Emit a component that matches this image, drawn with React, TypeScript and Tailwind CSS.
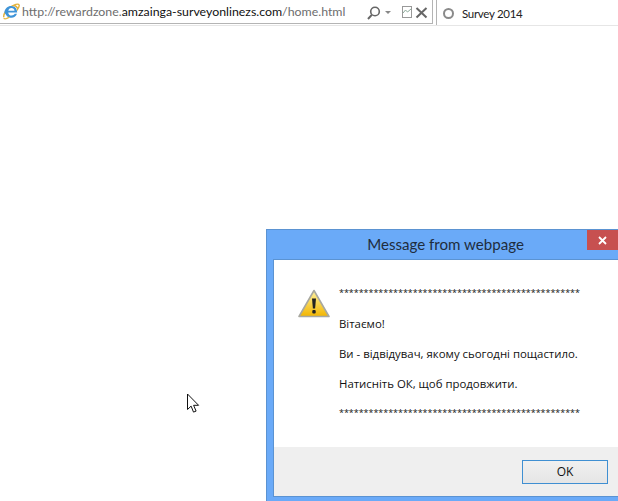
import React from "react";

const IeIcon = () => (
  <svg width="18" height="19" viewBox="0 0 19 19" className="shrink-0">
    <path d="M2 15.500C1 13 5 5.500 12 3c3-1.200 5.500-1.500 6-.5.600 1-.500 3-1.500 4.500C16.500 5 14.500 3 12 3.500" fill="none" stroke="#e3b23c" strokeWidth="1.500" />
    <path d="M2.500 10.500C3 6.500 6 3.800 9.700 3.800c3.900 0 6.300 3 6.300 6.700H6.600c.1 2 1.500 3.300 3.500 3.300 1.500 0 2.700-.6 3.300-1.800h2.400c-1 2.800-3.200 4.200-5.900 4.200-2.200 0-3.700-.8-4.800-1.900" fill="#3f94d8" />
    <path d="M6.700 8.700h6.500c-.1-1.800-1.500-2.900-3.200-2.900-1.800 0-3.100 1.200-3.300 2.900z" fill="#fff" />
    <path d="M1.800 16.700c1 1 3.500.4 6-1.200" fill="none" stroke="#e8bb46" strokeWidth="1.500" />
  </svg>
);

const Warning = () => (
  <svg width="32" height="30" viewBox="0 0 32 30">
    <defs>
      <linearGradient id="w" x1="0" y1="0" x2="0" y2="1">
        <stop offset="0" stopColor="#fff3a0" />
        <stop offset="1" stopColor="#f2b500" />
      </linearGradient>
    </defs>
    <path d="M16 1.500 31 27.500H1z" fill="url(#w)" stroke="#a8a8a0" strokeWidth="1.600" strokeLinejoin="round" />
    <path d="M14 9.500h4l-.9 10h-2.200z" fill="#222" />
    <rect x="14.300" y="21" width="3.400" height="3.600" rx="1" fill="#222" />
  </svg>
);

const Cursor = () => (
  <svg width="14" height="21" viewBox="0 0 14 21">
    <path d="M1.500 1v15.500l3.600-3.400 2.400 6 2.600-1-2.500-5.800h5z" fill="#fff" stroke="#111" strokeWidth="1" strokeLinejoin="miter" />
  </svg>
);

const stars = "*".repeat(49);

export default function App() {
  return (
    <div className="relative w-[618px] h-[501px] overflow-hidden bg-white font-['Open_Sans','Noto_Sans',sans-serif]">
      <div className="flex h-[26px] border-b border-[#e6e6e6]">
        <div className="flex w-[433px] h-[24px] shrink-0 items-center border-b border-r border-[#b4b4b4] pl-[2px] text-[#6d6d6d]">
          <IeIcon />
          <span className="ml-[2px] flex-1 whitespace-nowrap pt-[1px] font-['Lato',sans-serif] text-[12.350px]">
            http://rewardzone.<span className="text-[#111]">amzainga-surveyonlinezs.com</span>/home.html
          </span>
          <svg width="70" height="18" viewBox="0 0 70 18" className="shrink-0">
            <circle cx="13" cy="8.500" r="4.300" fill="none" stroke="#666" strokeWidth="1.600" />
            <path d="M9.800 11.800 6 16" stroke="#666" strokeWidth="2" />
            <path d="M23 8h6l-3 3z" fill="#888" />
            <rect x="40.500" y="3.500" width="9" height="11" fill="none" stroke="#999" />
            <path d="M41 10l2.500-3 2 2 3.500-3" fill="none" stroke="#8aa898" />
            <path d="M54.500 5l10 9.500m0-9.500l-10 9.500" stroke="#666" strokeWidth="2" />
          </svg>
        </div>
        <div className="ml-[3px] flex flex-1 items-center border-l border-[#b4b4b4] pl-[6px] pt-[2px] font-['Lato',sans-serif] text-[11.500px] tracking-[-0.3px] text-[#222]">
          <span className="mr-[8px] h-[11px] w-[11px] rounded-full border-2 border-[#8a8a8a]" />
          Survey 2014
        </div>
      </div>

      <div className="absolute left-[186px] top-[393px]">
        <Cursor />
      </div>

      <div className="absolute left-[266px] top-[229px] flex h-[272px] w-[352px] flex-col border-l border-t border-[#5b93d2] bg-[#6aaaf8]">
        <div className="relative flex h-[29px] shrink-0 items-center justify-center pl-[6px] pb-[1px] font-['Lato',sans-serif] text-[15.100px] text-[#1f2d3d]">
          Message from webpage
          <div className="absolute right-0 top-0 flex h-[20px] w-[31px] items-center justify-center bg-[#c75050]">
            <svg width="9" height="9" viewBox="0 0 9 9">
              <path d="M1 1l7 7m0-7l-7 7" stroke="#fff" strokeWidth="1.800" />
            </svg>
          </div>
        </div>
        <div className="mb-[4px] ml-[6px] flex flex-1 flex-col border-b border-l border-t border-[#5b93d2] bg-white">
          <div className="flex flex-1 pl-[24px] pt-[25px]">
            <div className="mt-[4px] w-[41px] shrink-0">
              <Warning />
            </div>
            <div className="text-[11.400px] leading-[15px] text-[#111]">
              <p className="h-[31px] whitespace-nowrap text-[9px] tracking-[-0.04px]">{stars}</p>
              <p className="h-[30px]">Вітаємо!</p>
              <p className="h-[30px]">Ви - відвідувач, якому сьогодні пощастило.</p>
              <p className="h-[29px]">Натисніть ОК, щоб продовжити.</p>
              <p className="whitespace-nowrap text-[9px] tracking-[-0.04px]">{stars}</p>
            </div>
          </div>
          <div className="flex h-[49px] shrink-0 items-start justify-end bg-[#efefef] pr-[10px] pt-[13px]">
            <div className="flex h-[24px] w-[86px] items-center justify-center border border-[#3f8fd2] bg-[linear-gradient(#f0f0f0,#e5e5e5)] text-[12px] text-[#111]">
              OK
            </div>
          </div>
        </div>
      </div>
    </div>
  );
}
